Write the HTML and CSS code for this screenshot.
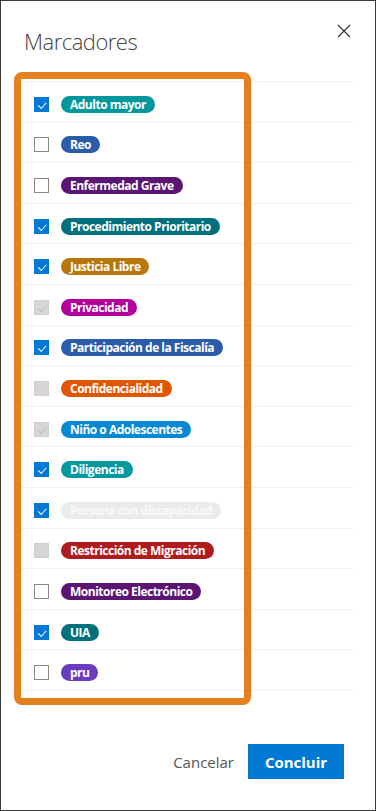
FILE: index.html
```html
<!doctype html>
<html>
  <head>
    <meta charset="utf-8" />
    <link rel="stylesheet" href="styles.css">
  </head>
  <body>
    <div class="dialog">
      <div class="header">
        <h1 class="title">Marcadores</h1>
        <button class="close" aria-label="Cerrar">
          <svg viewBox="0 0 14 14" width="14" height="14">
            <path d="M1 1l12 12M13 1L1 13" stroke="currentColor" stroke-width="1.1" fill="none" />
          </svg>
        </button>
      </div>

      <div class="list">
        <div class="row"><span class="check checked"></span><span class="tag tag-teal">Adulto mayor</span></div>
        <div class="row"><span class="check"></span><span class="tag tag-blue">Reo</span></div>
        <div class="row"><span class="check"></span><span class="tag tag-purple">Enfermedad Grave</span></div>
        <div class="row"><span class="check checked"></span><span class="tag tag-darkteal">Procedimiento Prioritario</span></div>
        <div class="row"><span class="check checked"></span><span class="tag tag-gold">Justicia Libre</span></div>
        <div class="row"><span class="check disabled checked"></span><span class="tag tag-magenta">Privacidad</span></div>
        <div class="row"><span class="check checked"></span><span class="tag tag-blue">Participación de la Fiscalía</span></div>
        <div class="row"><span class="check disabled"></span><span class="tag tag-orange">Confidencialidad</span></div>
        <div class="row"><span class="check disabled checked"></span><span class="tag tag-sky">Niño o Adolescentes</span></div>
        <div class="row"><span class="check checked"></span><span class="tag tag-teal">Diligencia</span></div>
        <div class="row"><span class="check checked"></span><span class="tag tag-faded">Persona con discapacidad</span></div>
        <div class="row"><span class="check disabled"></span><span class="tag tag-red">Restricción de Migración</span></div>
        <div class="row"><span class="check"></span><span class="tag tag-purple">Monitoreo Electrónico</span></div>
        <div class="row"><span class="check checked"></span><span class="tag tag-darkteal">UIA</span></div>
        <div class="row"><span class="check"></span><span class="tag tag-violet">pru</span></div>
      </div>

      <div class="footer">
        <button class="btn-link">Cancelar</button>
        <button class="btn-primary">Concluir</button>
      </div>

      <!-- highlight annotation -->
      <div class="highlight"></div>
    </div>
  </body>
</html>
```

FILE: styles.css
```css
* {
  box-sizing: border-box;
}

body {
  margin: 0;
  font-family: 'Open Sans', 'Noto Sans', sans-serif;
  color: #323130;
  background: #fff;
}

.dialog {
  position: relative;
  width: 376px;
  height: 811px;
  border: 1px solid #3c3c3c;
  display: flex;
  flex-direction: column;
}

/* Header */
.header {
  height: 80px;
  display: flex;
  justify-content: space-between;
  align-items: flex-start;
  padding: 25px 24px 0 23px;
}

.title {
  margin: 0;
  font-size: 22px;
  font-weight: 300;
  letter-spacing: -0.5px;
  line-height: 30px;
  color: #444;
}

.close {
  margin-top: -2px;
  padding: 0;
  border: none;
  background: transparent;
  color: #333;
  width: 14px;
  height: 14px;
  cursor: pointer;
}

.close svg {
  display: block;
}

/* List */
.list {
  margin: 0 22px 0 16px;
  border-bottom: 1px solid #f0f0f0;
}

.row {
  height: 40.6px;
  border-top: 1px solid #f0f0f0;
  padding: 5px 0 0 17px;
  display: flex;
  align-items: center;
  gap: 12px;
}

.check {
  width: 15px;
  height: 15px;
  border: 1px solid #8a8886;
  background: #fff;
  flex-shrink: 0;
  position: relative;
}

.check.checked {
  background: #0078d4;
  border-color: #0078d4;
}

.check.checked::after {
  content: '';
  position: absolute;
  left: 3px;
  top: 4px;
  width: 7px;
  height: 3.5px;
  border-left: 1px solid #fff;
  border-bottom: 1px solid #fff;
  transform: rotate(-48deg);
}

.check.disabled {
  background: #d6d6d6;
  border-color: #cfcfcf;
}

.check.disabled.checked::after {
  border-color: #bdbdbd;
}

.tag {
  height: 17px;
  line-height: 17px;
  padding: 0 9px;
  border-radius: 9px;
  font-size: 12px;
  font-weight: 700;
  letter-spacing: -0.5px;
  color: #fff;
  white-space: nowrap;
}

.tag-teal { background: #03979e; }
.tag-blue { background: #2a5caa; }
.tag-purple { background: #5b1673; }
.tag-darkteal { background: #00707c; }
.tag-gold { background: #b8760b; }
.tag-magenta { background: #b3009c; }
.tag-orange { background: #e05700; }
.tag-sky { background: #0589d3; }
.tag-red { background: #b11b1e; }
.tag-violet { background: #6b3cbd; }
.tag-faded {
  background: #ebebeb;
  color: #f9f9f9;
}

/* Footer */
.footer {
  margin-top: auto;
  display: flex;
  justify-content: flex-end;
  align-items: center;
  gap: 14px;
  padding: 0 31px 31px 0;
}

.btn-link {
  border: none;
  background: transparent;
  padding: 0;
  font-family: inherit;
  font-size: 15px;
  color: #555;
  cursor: pointer;
}

.btn-primary {
  width: 96px;
  height: 35px;
  border: none;
  background: #0078d4;
  color: #fff;
  font-family: inherit;
  font-size: 15px;
  font-weight: 700;
  cursor: pointer;
}

/* Orange highlight box */
.highlight {
  position: absolute;
  left: 13px;
  top: 71px;
  width: 237px;
  height: 633px;
  border: 7px solid #e5801e;
  border-radius: 8px;
  pointer-events: none;
}
```
